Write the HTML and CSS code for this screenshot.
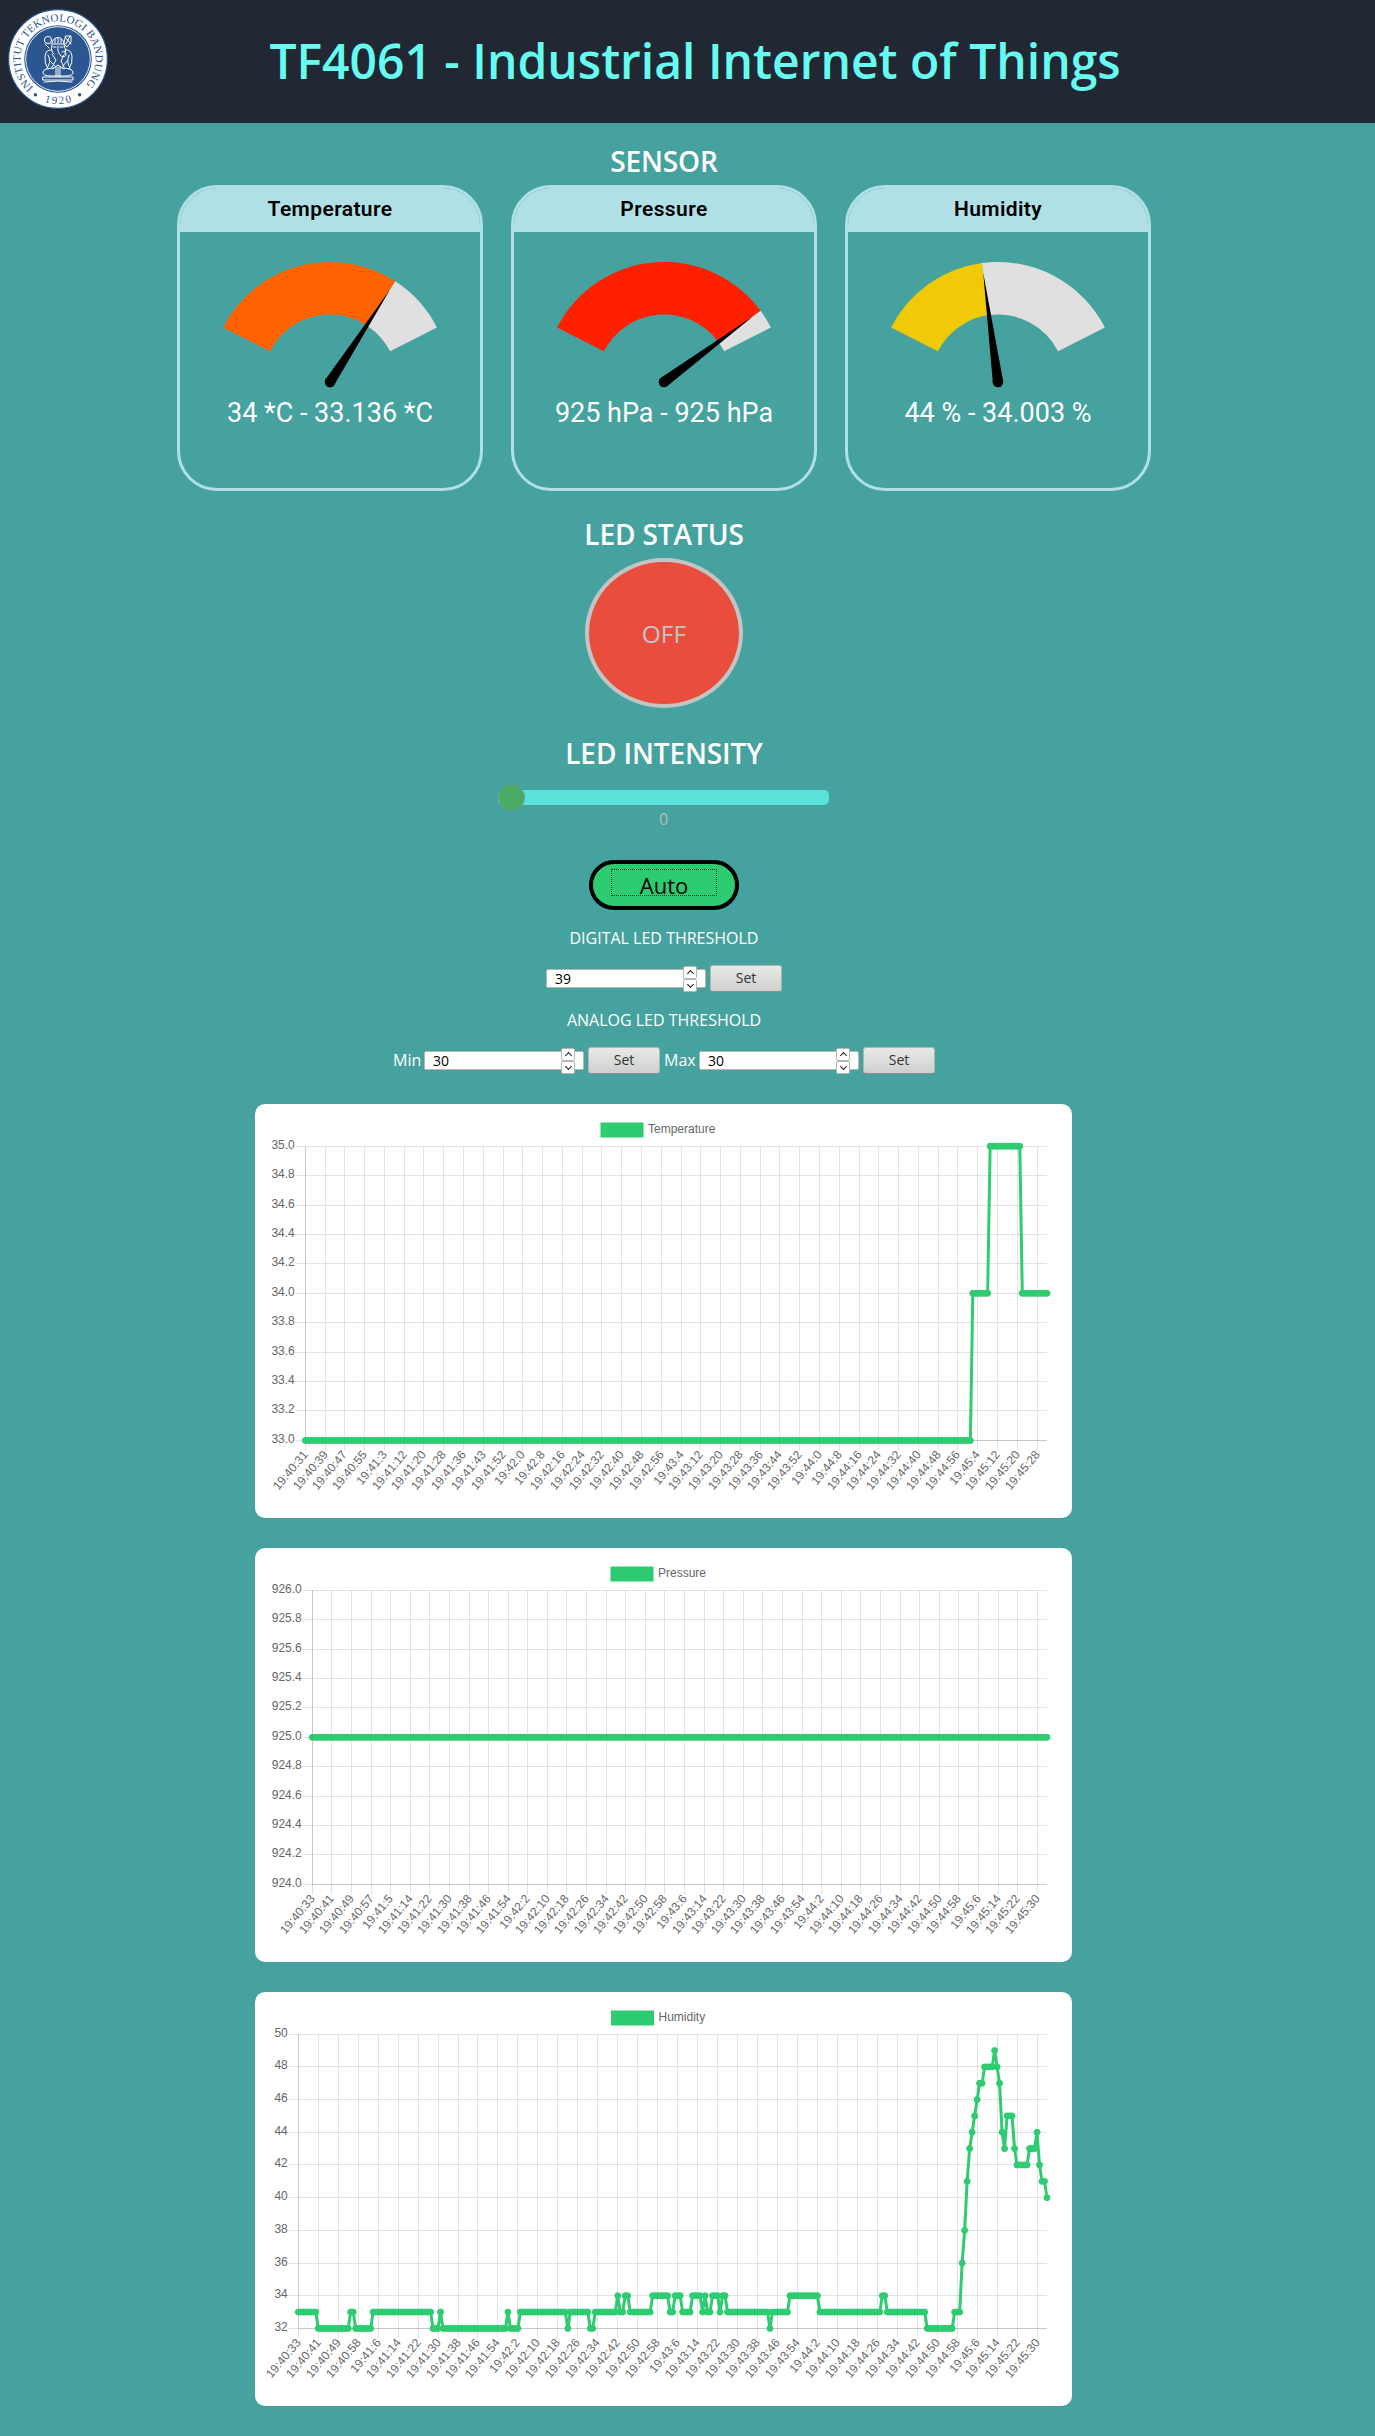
FILE: index.html
```html
<!DOCTYPE html>
<html lang="en">
<head>
<meta charset="utf-8">
<title>TF4061 - Industrial Internet of Things</title>
<link rel="stylesheet" href="styles.css">
</head>
<body>
<header class="topbar">
  <svg class="logo" viewBox="0 0 100 100" role="img" aria-label="Institut Teknologi Bandung">
    <defs>
      <path id="ring-top" d="M25.600 78.400 A37.500 37.500 0 1 1 78 75"/>
      <path id="ring-bottom" d="M33 91.700 A45 45 0 0 0 67 91.700"/>
    </defs>
    <circle cx="50" cy="50" r="49.4" fill="#fff" stroke="#2b568f" stroke-width="1.2"/>
    <circle cx="50" cy="50" r="33.8" fill="#2b568f"/>
    <circle cx="50" cy="50" r="32.3" fill="none" stroke="#fff" stroke-width=".9"/>
    <text class="logo-text"><textPath href="#ring-top" textLength="178">INSTITUT TEKNOLOGI BANDUNG</textPath></text>
    <text class="logo-text"><textPath href="#ring-bottom" startOffset="3.5" textLength="28">1920</textPath></text>
    <circle cx="27.4" cy="85.7" r="1.7" fill="#2b568f"/>
    <circle cx="71.6" cy="85.7" r="1.7" fill="#2b568f"/>
    <g fill="none" stroke="#fff" stroke-width="1" stroke-linejoin="round" stroke-linecap="round">
      <circle cx="40" cy="31" r="3.6"/>
      <path d="M37 35l4 4M57 28l6 7M62 27l-4 8M58 27h5v6l-4 5-3-3z"/>
      <path d="M44 34q1-5 6-5.500q5 .5 6 5.500M43 35h14M47 30v4M50 29v5M53 30v4"/>
      <path d="M44 36q-2 6 2 9M56 36q3 5 1 9M45 38h3M52 38h3M50 37q-1 6 3 10q5 2 5-2t-4-2"/>
      <path d="M44 41q-6-1-7 6t3 13M57 41q6-1 7 6t-3 13M40 46q4 7-1 13M61 46q-3 7 1 13M42 52l5 5M59 52l-4 5M44 60l6-4 6 4"/>
      <path d="M44 45l4 6-4 7M56 46l-3 6 3 6M48 58v9M50 58v9M52 58v9"/>
      <path d="M46 59q-10 0-11 4t9 4h12q10 0 9-4t-11-4M35 68h30v3h-30zM36 73q14-2 28 0"/>
    </g>
  </svg>
  <h1 class="title">TF4061 - Industrial Internet of Things</h1>
</header>

<main class="dashboard">
  <h2 class="section-title title-sensor">SENSOR</h2>
  <section class="cards">
    <article class="card">
      <h3 class="card-head">Temperature</h3>
      <svg class="gauge" viewBox="-120 -120 240 130" data-angle="33" data-color="#ff6200"></svg>
      <p class="reading">34 *C - 33.136 *C</p>
    </article>
    <article class="card">
      <h3 class="card-head">Pressure</h3>
      <svg class="gauge" viewBox="-120 -120 240 130" data-angle="53.6" data-color="#ff2000"></svg>
      <p class="reading">925 hPa - 925 hPa</p>
    </article>
    <article class="card">
      <h3 class="card-head">Humidity</h3>
      <svg class="gauge" viewBox="-120 -120 240 130" data-angle="-7.7" data-color="#f0ca06"></svg>
      <p class="reading">44 % - 34.003 %</p>
    </article>
  </section>

  <h2 class="section-title title-status">LED STATUS</h2>
  <button class="led" disabled>OFF</button>

  <h2 class="section-title title-intensity">LED INTENSITY</h2>
  <div class="slider"><span class="thumb"></span></div>
  <p class="slider-value">0</p>

  <button class="mode"><span class="mode-focus">Auto</span></button>

  <p class="caption">DIGITAL LED THRESHOLD</p>
  <div class="threshold">
    <div class="field"><span>39</span><span class="spin"><i class="up"></i><i class="down"></i></span></div>
    <button class="set">Set</button>
  </div>

  <p class="caption">ANALOG LED THRESHOLD</p>
  <div class="threshold">
    <span class="label-min">Min</span>
    <div class="field"><span>30</span><span class="spin"><i class="up"></i><i class="down"></i></span></div>
    <button class="set">Set</button>
    <span class="label-max">Max</span>
    <div class="field"><span>30</span><span class="spin"><i class="up"></i><i class="down"></i></span></div>
    <button class="set">Set</button>
  </div>

  <section class="charts">
    <svg class="chart" id="chart-temperature"></svg>
    <svg class="chart" id="chart-pressure"></svg>
    <svg class="chart" id="chart-humidity"></svg>
  </section>
</main>
<script src="script.js"></script>
</body>
</html>
```
FILE: styles.css
```css
* { box-sizing: border-box; }

body {
  margin: 0;
  background: #46a29f;
  color: #fff;
  font-family: "Open Sans", "Noto Sans", sans-serif;
}

h1, h2, h3, p { margin: 0; }
button { font-family: inherit; padding: 0; }

.topbar {
  display: flex;
  align-items: center;
  height: 123px;
  padding: 0 0 5px 8px;
  background: #212833;
}

.logo { width: 100px; height: 100px; flex: none; }

.logo-text {
  font-family: "Liberation Serif", serif;
  font-size: 11px;
  fill: #2b568f;
}

.title {
  flex: 1;
  padding-right: 93px;
  padding-top: 4px;
  color: #66fcf1;
  font-size: 48px;
  font-weight: 600;
  line-height: 64px;
  text-align: center;
  white-space: nowrap;
}

.dashboard {
  display: flex;
  flex-direction: column;
  align-items: center;
  width: 1328px;
  padding: 19px 0 30px;
}

.section-title {
  font-size: 28px;
  font-weight: 600;
  line-height: 38px;
  letter-spacing: -.1px;
  white-space: nowrap;
}

.cards { display: flex; gap: 28px; margin-top: 5px; }

.card {
  display: flex;
  flex-direction: column;
  align-items: center;
  width: 306px;
  height: 306px;
  border: 3px solid #b0e0e6;
  border-radius: 40px;
  overflow: hidden;
  font-family: Roboto, sans-serif;
}

.card-head {
  width: 100%;
  height: 44px;
  background: #b0e0e6;
  color: #000;
  font-size: 21px;
  font-weight: 600;
  line-height: 43px;
  letter-spacing: .4px;
  text-align: center;
}

.gauge { width: 240px; height: 130px; margin-top: 30px; }

.reading {
  margin-top: 6px;
  font-size: 27px;
  line-height: 30px;
}

.title-status { margin-top: 24px; }
.title-intensity { margin-top: 26px; }

.led {
  width: 158px;
  height: 150px;
  margin-top: 5px;
  border: 4px solid #c4c4c4;
  border-radius: 50%;
  background: #e84d3d;
  color: #c4c4c4;
  font-size: 24.5px;
}

.slider {
  position: relative;
  width: 331px;
  height: 15px;
  margin: 18px 1px 0 0;
  border-radius: 5px;
  background: #5be2da;
}

.thumb {
  position: absolute;
  left: 0;
  top: -6px;
  width: 27px;
  height: 27px;
  border: 1px solid #66a27e;
  border-radius: 50%;
  background: #4caa67;
}

.slider-value {
  margin: 3px 1px 0 0;
  color: #bbb;
  font-size: 16px;
  line-height: 22px;
}

.mode {
  display: flex;
  justify-content: center;
  width: 150px;
  height: 50px;
  margin-top: 30px;
  padding-top: 5px;
  border: 4px solid #000;
  border-radius: 25px;
  background: #2ecc71;
  color: #000;
}

.mode-focus {
  width: 106px;
  height: 27px;
  border: 1px dotted #0b3b1f;
  font-size: 22px;
  line-height: 31px;
}

.caption {
  margin-top: 17px;
  font-size: 16px;
  line-height: 22px;
}

.threshold {
  display: flex;
  align-items: center;
  gap: 4px;
  height: 27px;
  margin-top: 16px;
  font-size: 16px;
  line-height: 27px;
}

.label-min { width: 27px; }
.label-max { width: 31px; }

.field {
  display: flex;
  align-items: center;
  justify-content: space-between;
  width: 160px;
  height: 19px;
  padding: 0 8px;
  border: 1px solid #b6b6b3;
  border-radius: 2px;
  background: #fff;
  color: #000;
  font-size: 14px;
  font-weight: 500;
}

.spin {
  display: grid;
  grid-template-rows: 13px 13px;
  width: 14px;
  height: 26px;
}

.spin i {
  display: grid;
  place-items: center;
  border: 1px solid #b6b6b3;
  border-radius: 2px;
  background: #fff;
}

.spin i::before {
  content: "";
  width: 4px;
  height: 4px;
  border: solid #222;
  border-width: 1.5px 0 0 1.5px;
}

.spin .up::before { transform: translateY(1px) rotate(45deg); }
.spin .down::before { transform: translateY(-1px) rotate(225deg); }

.set {
  width: 72px;
  height: 27px;
  padding-bottom: 1px;
  border: 1px solid #b4b4b1;
  border-bottom-color: #8f8f8d;
  border-radius: 3px;
  background: linear-gradient(#e9e9e8, #cfcfce);
  color: #2e3436;
  font-size: 14px;
  line-height: 22px;
}

.charts {
  display: flex;
  flex-direction: column;
  gap: 30px;
  margin: 30px 1px 0 0;
}

.chart {
  display: block;
  width: 817px;
  height: 414px;
  border-radius: 10px;
  background: #fff;
  font-family: "Liberation Sans", Arial, sans-serif;
  font-size: 12px;
}

.chart text { fill: #666; }
.grid { stroke: rgba(0, 0, 0, .11); stroke-width: 1; }
.series { fill: none; stroke: #2ecc71; stroke-width: 3; stroke-linejoin: round; }
.point { fill: #2ecc71; stroke: #2ecc71; stroke-width: 1; }
.swatch { fill: #2ecc71; stroke: #2ecc71; stroke-width: 3; }
```
FILE: script.js
```js
const NS = 'http://www.w3.org/2000/svg';

function add(parent, tag, attrs, text) {
  const el = document.createElementNS(NS, tag);
  for (const key in attrs) el.setAttribute(key, attrs[key]);
  if (text !== undefined) el.textContent = text;
  parent.appendChild(el);
  return el;
}

/* Gauges: angles in degrees, measured clockwise from straight up. */
const OUTER = 120, INNER = 67.5, LIMIT = 63;

function polar(r, deg) {
  const a = deg * Math.PI / 180;
  return (r * Math.sin(a)).toFixed(2) + ' ' + (-r * Math.cos(a)).toFixed(2);
}

function band(from, to) {
  return `M${polar(OUTER, from)}A${OUTER} ${OUTER} 0 0 1 ${polar(OUTER, to)}` +
    `L${polar(INNER, to)}A${INNER} ${INNER} 0 0 0 ${polar(INNER, from)}Z`;
}

document.querySelectorAll('.gauge').forEach(svg => {
  const angle = Number(svg.dataset.angle);
  add(svg, 'path', { d: band(-LIMIT, angle), fill: svg.dataset.color });
  add(svg, 'path', { d: band(angle, LIMIT), fill: '#e0e0e0' });
  const needle = add(svg, 'g', { transform: `rotate(${angle})` });
  add(needle, 'path', { d: 'M-5.200 0L0 -110L5.200 0Z' });
  add(needle, 'circle', { r: 5.3 });
});

/* Time labels: "minute: seconds, seconds" groups within hour 19. */
function times(groups) {
  return Object.entries(groups).flatMap(([m, list]) => list.map(s => `19:${m}:${s}`));
}

/* Expands [value, count] runs into one value per sample. */
function expand(runs) {
  return runs.flatMap(([value, count]) => Array(count).fill(value));
}

function drawChart(id, cfg) {
  const svg = document.getElementById(id);
  const right = 792, top = 42.2, bottom = 336.4, left = cfg.left;
  const snap = v => Math.floor(v) + 0.5;
  const x = i => left + (right - left) * i / 300;
  const y = v => bottom - (bottom - top) * (v - cfg.min) / (cfg.max - cfg.min);
  const line = (x1, y1, x2, y2) => add(svg, 'line', { class: 'grid', x1, y1, x2, y2 });

  add(svg, 'rect', { class: 'swatch', x: cfg.legend, y: 20, width: 40, height: 12 });
  add(svg, 'text', { x: cfg.legend + 46, y: 29 }, cfg.name);

  const steps = Math.round((cfg.max - cfg.min) / cfg.step);
  for (let k = 0; k <= steps; k++) {
    const value = cfg.min + k * cfg.step;
    const py = snap(y(value));
    line(left - 10, py, right, py);
    add(svg, 'text', { x: left - 10.5, y: py + 2.5, 'text-anchor': 'end' }, value.toFixed(cfg.digits));
  }

  cfg.labels.forEach((label, k) => {
    const px = snap(x(k * 8));
    line(px, top, px, bottom + 10);
    add(svg, 'text', {
      transform: `translate(${px} ${bottom + 12}) rotate(-50)`,
      'text-anchor': 'end',
      y: 4
    }, label);
  });
  line(snap(left), top, snap(left), bottom);
  line(left, snap(bottom), right, snap(bottom));

  const pts = cfg.data.map((v, i) => [x(i).toFixed(2), y(v).toFixed(2)]);
  add(svg, 'polyline', { class: 'series', points: pts.map(p => p.join()).join(' ') });
  pts.forEach(([cx, cy]) => add(svg, 'circle', { class: 'point', cx, cy, r: 3 }));
}

drawChart('chart-temperature', {
  name: 'Temperature', legend: 347, left: 50.3, min: 33, max: 35, step: 0.2, digits: 1,
  labels: times({
    40: [31, 39, 47, 55], 41: [3, 12, 20, 28, 36, 43, 52],
    42: [0, 8, 16, 24, 32, 40, 48, 56], 43: [4, 12, 20, 28, 36, 44, 52],
    44: [0, 8, 16, 24, 32, 40, 48, 56], 45: [4, 12, 20, 28]
  }),
  data: expand([[33, 270], [34, 7], [35, 13], [34, 11]])
});

drawChart('chart-pressure', {
  name: 'Pressure', legend: 357, left: 57.3, min: 924, max: 926, step: 0.2, digits: 1,
  labels: times({
    40: [33, 41, 49, 57], 41: [5, 14, 22, 30, 38, 46, 54],
    42: [2, 10, 18, 26, 34, 42, 50, 58], 43: [6, 14, 22, 30, 38, 46, 54],
    44: [2, 10, 18, 26, 34, 42, 50, 58], 45: [6, 14, 22, 30]
  }),
  data: expand([[925, 301]])
});

drawChart('chart-humidity', {
  name: 'Humidity', legend: 357.5, left: 43.3, min: 32, max: 50, step: 2, digits: 0,
  labels: times({
    40: [33, 41, 49, 58], 41: [6, 14, 22, 30, 38, 46, 54],
    42: [2, 10, 18, 26, 34, 42, 50, 58], 43: [6, 14, 22, 30, 38, 46, 54],
    44: [2, 10, 18, 26, 34, 42, 50, 58], 45: [6, 14, 22, 30]
  }),
  data: expand([
    [33, 8], [32, 13], [33, 2], [32, 7], [33, 24], [32, 3], [33, 1], [32, 26], [33, 1],
    [32, 4], [33, 19], [32, 1], [33, 8], [32, 2], [33, 9], [34, 1], [33, 2], [34, 2],
    [33, 9], [34, 7], [33, 2], [34, 3], [33, 4], [34, 4], [33, 1], [34, 1], [33, 2],
    [34, 3], [33, 1], [34, 2], [33, 17], [32, 1], [33, 7], [34, 12], [33, 25], [34, 2],
    [33, 16], [32, 11], [33, 3], [36, 1], [38, 1], [41, 1], [43, 1], [44, 1], [45, 1],
    [46, 1], [47, 2], [48, 4], [49, 1], [48, 1], [47, 1], [44, 1], [43, 1], [45, 3],
    [43, 1], [42, 5], [43, 3], [44, 1], [42, 1], [41, 2], [40, 1]
  ])
});
```
